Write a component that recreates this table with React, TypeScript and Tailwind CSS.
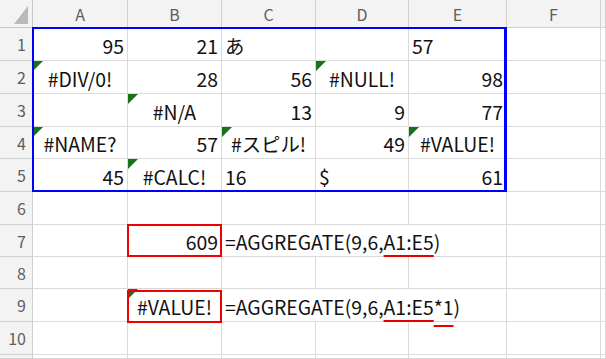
import React from "react";

type Align = "l" | "r" | "c";
type Cell = { t?: React.ReactNode; a?: Align; err?: boolean };

const COLS = ["A", "B", "C", "D", "E", "F", ""];
const ROW_H = ["h-[33px]", "h-[33px]", "h-[33px]", "h-[32px]", "h-[33px]", "h-[33px]", "h-[32px]", "h-[32px]", "h-[33px]", "h-[33px]", "h-[4px]"];

const n = (t: string): Cell => ({ t, a: "r" });
const s = (t: string): Cell => ({ t, a: "l" });
const e = (t: string): Cell => ({ t, a: "c", err: true });
const blank: Cell = {};

const data: Cell[][] = [
  [n("95"), n("21"), s("あ"), blank, s("57"), blank, blank],
  [e("#DIV/0!"), n("28"), n("56"), e("#NULL!"), n("98"), blank, blank],
  [blank, e("#N/A"), n("13"), n("9"), n("77"), blank, blank],
  [e("#NAME?"), n("57"), e("#スピル!"), n("49"), e("#VALUE!"), blank, blank],
  [n("45"), e("#CALC!"), s("16"), s("$"), n("61"), blank, blank],
];

const alignCls: Record<Align, string> = {
  l: "justify-start pl-[3px]",
  r: "justify-end pr-[3px]",
  c: "justify-center",
};

function ErrorMark() {
  return (
    <span className="absolute left-0 top-0 h-0 w-0 border-t-[10px] border-r-[10px] border-t-[#1b701b] border-r-transparent" />
  );
}

function GridCell({ cell, span }: { cell: Cell; span?: string }) {
  return (
    <div
      className={`relative flex items-end overflow-visible whitespace-nowrap border-r border-b border-[#dadada] pb-[2px] leading-[24px] ${
        alignCls[cell.a ?? "l"]
      } ${span ?? ""}`}
    >
      {cell.err && <ErrorMark />}
      {cell.t}
    </div>
  );
}

function RowHead({ label, h }: { label: string; h: string }) {
  return (
    <div
      className={`flex items-center justify-end border-r border-b border-[#d0d0d0] bg-[#f3f3f3] pr-[6px] text-[16px] text-[#5e5e5e] ${h}`}
    >
      {label}
    </div>
  );
}

export default function App() {
  return (
    <div
      className="relative h-[359px] w-[606px] overflow-hidden bg-white text-[19.4px] text-[#111]"
      style={{ fontFamily: '"Noto Sans CJK JP", "Noto Sans", sans-serif' }}
    >
      <div className="grid grid-cols-[33px_95px_94px_94px_93px_98px_94px_1fr]">
        {/* corner */}
        <div className="relative h-[28px] border-r border-b border-[#c8c8c8] bg-[#f3f3f3]">
          <span className="absolute right-[4px] bottom-[3px] h-0 w-0 border-b-[18px] border-l-[14px] border-b-[#b9b9b9] border-l-transparent" />
        </div>
        {COLS.map((c, i) => (
          <div
            key={i}
            className="flex h-[28px] items-center justify-center border-r border-b border-[#d0d0d0] bg-[#f3f3f3] text-[16px] text-[#5e5e5e]"
          >
            {c}
          </div>
        ))}

        {data.map((row, r) => (
          <React.Fragment key={r}>
            <RowHead label={String(r + 1)} h={ROW_H[r]} />
            {row.map((cell, c) => (
              <GridCell key={c} cell={cell} />
            ))}
          </React.Fragment>
        ))}

        {/* row 6 */}
        <RowHead label="6" h={ROW_H[5]} />
        {COLS.map((_, c) => (
          <GridCell key={c} cell={blank} />
        ))}

        {/* row 7 */}
        <RowHead label="7" h={ROW_H[6]} />
        <GridCell cell={blank} />
        <GridCell cell={n("609")} />
        <GridCell
          span="col-span-3"
          cell={{
            a: "l",
            t: (
              <span>
                =AGGREGATE(9,6,
                <span className="underline decoration-[#e60000] decoration-2 underline-offset-[5px]">A1:E5</span>)
              </span>
            ),
          }}
        />
        <GridCell cell={blank} />
        <GridCell cell={blank} />

        {/* row 8 */}
        <RowHead label="8" h={ROW_H[7]} />
        {COLS.map((_, c) => (
          <GridCell key={c} cell={blank} />
        ))}

        {/* row 9 */}
        <RowHead label="9" h={ROW_H[8]} />
        <GridCell cell={blank} />
        <GridCell cell={e("#VALUE!")} />
        <GridCell
          span="col-span-3"
          cell={{
            a: "l",
            t: (
              <span>
                =AGGREGATE(9,6,
                <span className="underline decoration-[#e60000] decoration-2 underline-offset-[5px]">A1:E5</span>
                <span className="underline decoration-[#e60000] decoration-2 underline-offset-[10px]">*1</span>)
              </span>
            ),
          }}
        />
        <GridCell cell={blank} />
        <GridCell cell={blank} />

        {/* row 10 */}
        <RowHead label="10" h={ROW_H[9]} />
        {COLS.map((_, c) => (
          <GridCell key={c} cell={blank} />
        ))}

        {/* row 11 sliver */}
        <RowHead label="" h={ROW_H[10]} />
        {COLS.map((_, c) => (
          <GridCell key={c} cell={blank} />
        ))}
      </div>

      {/* selection outline around A1:E5 */}
      <div className="pointer-events-none absolute left-[32px] top-[27px] h-[165px] w-[475px] border-2 border-r-[3px] border-[#0000ff]" />
      {/* highlighted result cells */}
      <div className="pointer-events-none absolute left-[127px] top-[224px] h-[33px] w-[95px] border-2 border-[#f00000]" />
      <div className="pointer-events-none absolute left-[127px] top-[290px] h-[33px] w-[95px] border-2 border-[#f00000]" />
    </div>
  );
}
